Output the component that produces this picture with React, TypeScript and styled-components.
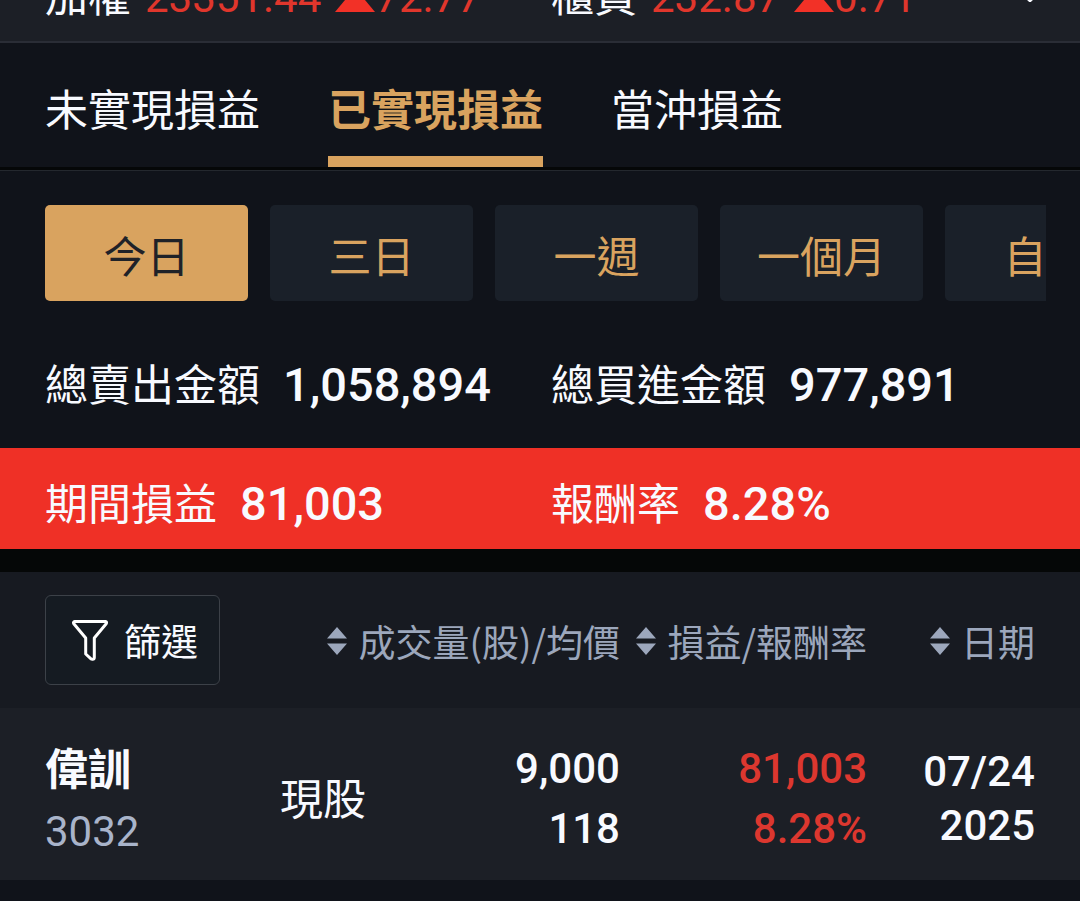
import React, { useState } from "react";
import styled, { createGlobalStyle } from "styled-components";

const cjk = `"Noto Sans CJK TC", Roboto, sans-serif`;
const latin = `Roboto, "Noto Sans CJK TC", sans-serif`;

const GlobalStyle = createGlobalStyle`
  *, *::before, *::after { box-sizing: border-box; }
  body {
    margin: 0;
    background: #10131a;
    color: #f8faff;
    font-family: ${cjk};
    font-size: 43px;
    line-height: 60px;
  }
  button {
    margin: 0;
    padding: 0;
    border: 0;
    background: none;
    color: inherit;
    font: inherit;
    cursor: pointer;
    white-space: nowrap;
  }
`;

const Page = styled.main`
  overflow: hidden;
`;

const TwoColumns = styled.div`
  flex: 1;
  display: grid;
  grid-template-columns: 1fr 1fr;
  padding: 0 23px 0 45px;
`;

const TickerBar = styled.header`
  position: relative;
  display: flex;
  align-items: flex-end;
  height: 43px;
  padding-bottom: 13px;
  overflow: hidden;
  background: #1c1f26;
  border-bottom: 2px solid #2a2d36;
`;

const IndexQuote = styled.div`
  display: flex;
  align-items: baseline;
  white-space: nowrap;
`;

const IndexValue = styled.span`
  margin: 0 14px;
  color: #e0362c;
  font: 400 42px/60px ${latin};
`;

const IndexChange = styled(IndexValue)`
  margin: 0;
`;

const ExpandButton = styled.button`
  position: absolute;
  right: 32px;
  bottom: 38px;
  height: 20px;
  line-height: 0;
`;

const TabBar = styled.nav`
  display: flex;
  gap: 68px;
  height: 127px;
  padding: 0 45px;
  border-bottom: 3px solid #050708;
`;

const Tab = styled.button<{ $active: boolean }>`
  height: 124px;
  padding-top: 14px;
  border-bottom: 11px solid ${(p) => (p.$active ? "#d9a35f" : "transparent")};
  color: ${(p) => (p.$active ? "#d9a35f" : "#f8faff")};
  font-weight: ${(p) => (p.$active ? 700 : 400)};
`;

const PeriodBar = styled.div`
  display: flex;
  gap: 22px;
  margin-right: 34px;
  padding: 34px 0 0 45px;
  overflow: hidden;
`;

const PeriodRule = styled.div`
  border-top: 1px solid #24282e;
`;

const PeriodButton = styled.button<{ $active: boolean }>`
  flex: none;
  width: 203px;
  height: 96px;
  padding-top: 2px;
  border-radius: 5px;
  background: ${(p) => (p.$active ? "#d9a35f" : "#1a2029")};
  color: ${(p) => (p.$active ? "#1f2228" : "#d9a35f")};
`;

const SummaryBand = styled(TwoColumns)<{ $highlight?: boolean }>`
  align-items: center;
  height: ${(p) => (p.$highlight ? "101px" : "147px")};
  padding-top: ${(p) => (p.$highlight ? "8px" : "18px")};
  background: ${(p) => (p.$highlight ? "#ef3026" : "transparent")};
`;

const Figure = styled.div`
  display: flex;
  align-items: baseline;
  gap: 23px;
  white-space: nowrap;
`;

const FigureValue = styled.strong`
  font: 500 47px/60px ${latin};
`;

const Holdings = styled.table`
  width: 100%;
  table-layout: fixed;
  border-spacing: 0;
  border-top: 23px solid #050707;
`;

const Column = styled.col<{ $width?: number }>`
  width: ${(p) => (p.$width ? `${p.$width}px` : "auto")};
`;

const HeadRow = styled.tr`
  height: 136px;
  background: #171a21;
`;

const HeadCell = styled.th`
  padding: 0 0 4px;
  text-align: right;
  font-weight: 400;
  font-size: 37px;
  &:first-child { padding: 0 0 0 45px; text-align: left; }
  &:last-child { padding-right: 45px; }
`;

const FilterButton = styled.button`
  display: flex;
  align-items: center;
  justify-content: center;
  gap: 16px;
  width: 175px;
  height: 90px;
  padding-left: 5px;
  border: 1px solid #3c4148;
  border-radius: 6px;
  background: #151b22;
`;

const SortButton = styled.button`
  display: inline-flex;
  align-items: center;
  gap: 11px;
  vertical-align: middle;
  color: #9ca7bc;
`;

const BodyRow = styled.tr`
  height: 172px;
  background: #1c1f26;
`;

const BodyCell = styled.td<{ $tone?: "gain" }>`
  padding: 9px 0 0;
  text-align: right;
  white-space: nowrap;
  color: ${(p) => (p.$tone ? "#dc372f" : "inherit")};
  font-weight: 500;
  font-family: ${latin};
  font-size: 42px;
  &:last-child { padding-right: 45px; line-height: 54px; }
`;

const StockCell = styled(BodyCell)`
  padding-left: 45px;
  text-align: left;
  line-height: 66px;
`;

const TypeCell = styled(BodyCell)`
  padding-top: 4px;
  font: 400 43px/60px ${cjk};
  text-align: center;
`;

const Line = styled.div``;

const StockName = styled.div`
  font: 700 43px/66px ${cjk};
`;

const StockCode = styled.div`
  color: #a9b4ca;
  font-weight: 400;
`;

const UpTriangle = () => (
  <svg width="40" height="24" viewBox="0 0 40 24" aria-hidden="true">
    <path d="M20 0 40 24H0Z" fill="#f23127" />
  </svg>
);

const SortIcon = () => (
  <svg width="20" height="28" viewBox="0 0 20 28" aria-hidden="true">
    <path d="M10 0 20 11.500H0ZM0 16.500H20L10 28Z" fill="currentColor" />
  </svg>
);

const FilterIcon = () => (
  <svg width="36" height="41" viewBox="0 0 36 41" fill="none" stroke="#fff" strokeWidth="3" strokeLinejoin="round" aria-hidden="true">
    <path d="M2.800 1.600H33.400Q35.300 1.900 34.200 3.700L22.300 18V37.500Q22.300 39.500 20.500 39.300L19 38.800L13.700 34V18L1.800 3.700Q.8 1.900 2.800 1.600Z" />
  </svg>
);

const indices = [
  { name: "加權", value: "23351.44", change: "72.77" },
  { name: "櫃買", value: "232.87", change: "0.71" },
];
const tabs = ["未實現損益", "已實現損益", "當沖損益"];
const periods = ["今日", "三日", "一週", "一個月", "自訂"];
const sortable = [
  { label: "成交量(股)/均價", span: 2 },
  { label: "損益/報酬率", span: 1 },
  { label: "日期", span: 1 },
];

export default function App() {
  const [tab, setTab] = useState(tabs[1]);
  const [period, setPeriod] = useState(periods[0]);

  return (
    <Page>
      <GlobalStyle />
      <TickerBar>
        <TwoColumns>
          {indices.map((i) => (
            <IndexQuote key={i.name}>
              <span>{i.name}</span>
              <IndexValue>{i.value}</IndexValue>
              <UpTriangle />
              <IndexChange>{i.change}</IndexChange>
            </IndexQuote>
          ))}
        </TwoColumns>
        <ExpandButton aria-label="展開">
          <svg width="36" height="20" viewBox="0 0 36 20" fill="none" stroke="#f8faff" strokeWidth="4">
            <path d="M2 2 18 17 34 2" strokeLinecap="round" strokeLinejoin="round" />
          </svg>
        </ExpandButton>
      </TickerBar>

      <TabBar>
        {tabs.map((t) => (
          <Tab key={t} $active={t === tab} onClick={() => setTab(t)}>
            {t}
          </Tab>
        ))}
      </TabBar>

      <PeriodRule />
      <PeriodBar>
        {periods.map((p) => (
          <PeriodButton key={p} $active={p === period} onClick={() => setPeriod(p)}>
            {p}
          </PeriodButton>
        ))}
      </PeriodBar>

      <SummaryBand>
        <Figure>
          <span>總賣出金額</span>
          <FigureValue>1,058,894</FigureValue>
        </Figure>
        <Figure>
          <span>總買進金額</span>
          <FigureValue>977,891</FigureValue>
        </Figure>
      </SummaryBand>
      <SummaryBand $highlight>
        <Figure>
          <span>期間損益</span>
          <FigureValue>81,003</FigureValue>
        </Figure>
        <Figure>
          <span>報酬率</span>
          <FigureValue>8.28%</FigureValue>
        </Figure>
      </SummaryBand>

      <Holdings>
        <colgroup>
          <Column />
          <Column $width={86} />
          <Column $width={254} />
          <Column $width={247} />
          <Column $width={213} />
        </colgroup>
        <thead>
          <HeadRow>
            <HeadCell>
              <FilterButton>
                <FilterIcon />
                篩選
              </FilterButton>
            </HeadCell>
            {sortable.map((s) => (
              <HeadCell key={s.label} colSpan={s.span}>
                <SortButton>
                  <SortIcon />
                  {s.label}
                </SortButton>
              </HeadCell>
            ))}
          </HeadRow>
        </thead>
        <tbody>
          <BodyRow>
            <StockCell>
              <StockName>偉訓</StockName>
              <StockCode>3032</StockCode>
            </StockCell>
            <TypeCell>現股</TypeCell>
            <BodyCell>
              <Line>9,000</Line>
              <Line>118</Line>
            </BodyCell>
            <BodyCell $tone="gain">
              <Line>81,003</Line>
              <Line>8.28%</Line>
            </BodyCell>
            <BodyCell>
              <Line>07/24</Line>
              <Line>2025</Line>
            </BodyCell>
          </BodyRow>
        </tbody>
      </Holdings>
    </Page>
  );
}
